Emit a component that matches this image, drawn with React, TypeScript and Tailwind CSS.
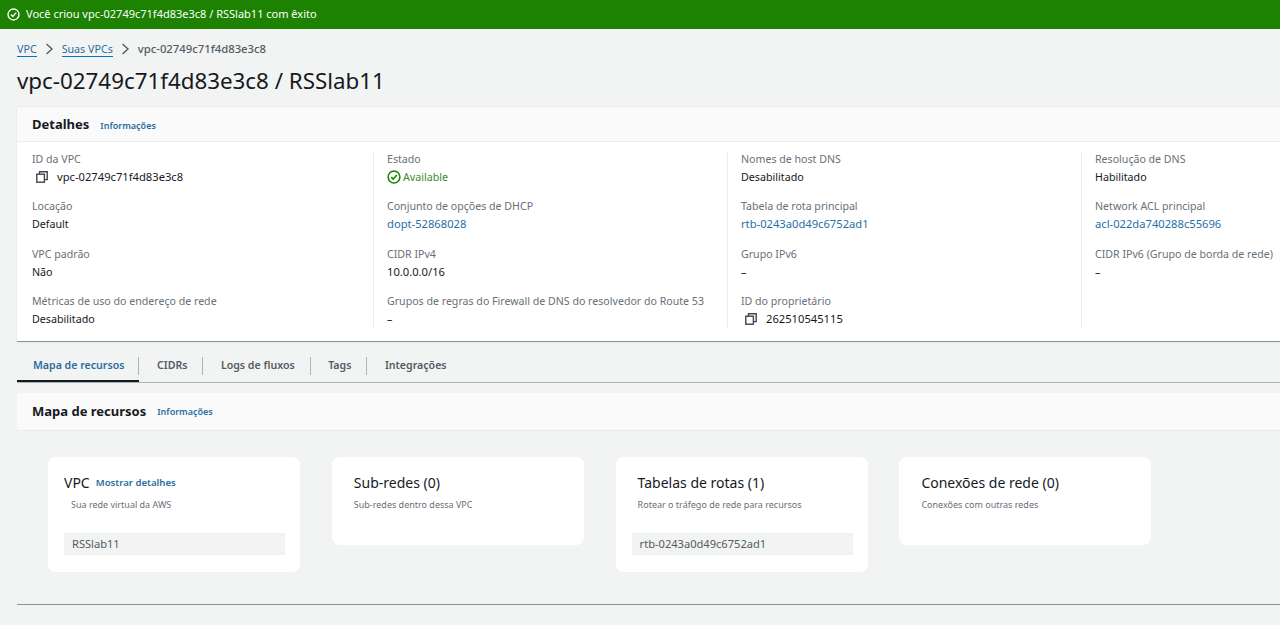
import React from "react";

const Copy = () => (
  <svg width="12" height="12" viewBox="0 0 12 12" fill="none" stroke="#414750" strokeWidth="1.4" className="shrink-0">
    <rect x="0.8" y="3.2" width="7.6" height="8" />
    <path d="M3.5 3V0.8H11.2V8.6H8.6" />
  </svg>
);

const Check = ({ color, size }: { color: string; size: number }) => (
  <svg width={size} height={size} viewBox="0 0 14 14" fill="none" stroke={color} strokeWidth="1.5" className="shrink-0">
    <circle cx="7" cy="7" r="5.9" />
    <path d="M4.2 7.1 6.2 9.1 9.9 5" />
  </svg>
);

const Chevron = () => (
  <svg width="9" height="12" viewBox="0 0 9 12" fill="none" stroke="#545b64" strokeWidth="1.4" className="shrink-0">
    <path d="M1.5 1 7 6 1.5 11" />
  </svg>
);

type Item = { l: string; v: string; kind?: "link" | "copy" | "ok" };

const columns: Item[][] = [
  [
    { l: "ID da VPC", v: "vpc-02749c71f4d83e3c8", kind: "copy" },
    { l: "Locação", v: "Default" },
    { l: "VPC padrão", v: "Não" },
    { l: "Métricas de uso do endereço de rede", v: "Desabilitado" },
  ],
  [
    { l: "Estado", v: "Available", kind: "ok" },
    { l: "Conjunto de opções de DHCP", v: "dopt-52868028", kind: "link" },
    { l: "CIDR IPv4", v: "10.0.0.0/16" },
    { l: "Grupos de regras do Firewall de DNS do resolvedor do Route 53", v: "–" },
  ],
  [
    { l: "Nomes de host DNS", v: "Desabilitado" },
    { l: "Tabela de rota principal", v: "rtb-0243a0d49c6752ad1", kind: "link" },
    { l: "Grupo IPv6", v: "–" },
    { l: "ID do proprietário", v: "262510545115", kind: "copy" },
  ],
  [
    { l: "Resolução de DNS", v: "Habilitado" },
    { l: "Network ACL principal", v: "acl-022da740288c55696", kind: "link" },
    { l: "CIDR IPv6 (Grupo de borda de rede)", v: "–" },
  ],
];

const Field = ({ item }: { item: Item }) => {
  const size = /\d/.test(item.v) ? "text-[11.2px]" : "text-[10.7px]";
  return (
    <div className="h-[47.33px]">
      <div className="h-[16px] text-[10.62px] leading-[14px] whitespace-nowrap text-[#687078]">{item.l}</div>
      <div className={size + " leading-[18px]"}>
        {item.kind === "copy" && (
          <div className="flex items-center gap-[9px] pl-1 text-[#16191f]">
            <Copy />
            <span>{item.v}</span>
          </div>
        )}
        {item.kind === "ok" && (
          <div className="flex items-center gap-[2px] text-[#3b8a2a]">
            <Check color="#1d8102" size={14} />
            <span>{item.v}</span>
          </div>
        )}
        {item.kind === "link" && <div className="text-[#1f6fa8]">{item.v}</div>}
        {!item.kind && <div className="text-[#16191f]">{item.v}</div>}
      </div>
    </div>
  );
};

const tabs = ["Mapa de recursos", "CIDRs", "Logs de fluxos", "Tags", "Integrações"];

const resources = [
  { t: "VPC", link: "Mostrar detalhes", d: "Sua rede virtual da AWS", v: "RSSlab11", first: true },
  { t: "Sub-redes (0)", d: "Sub-redes dentro dessa VPC" },
  { t: "Tabelas de rotas (1)", d: "Rotear o tráfego de rede para recursos", v: "rtb-0243a0d49c6752ad1" },
  { t: "Conexões de rede (0)", d: "Conexões com outras redes" },
];

export default function App() {
  return (
    <div
      className="h-[625px] w-[1280px] overflow-hidden bg-[#f2f3f3] text-[#16191f]"
      style={{ fontFamily: '"Noto Sans", "Open Sans", sans-serif' }}
    >
      <div className="flex h-[29px] items-center gap-[6px] bg-[#1d8102] pl-[7px] text-[11px] text-white">
        <Check color="#ffffff" size={13} />
        <span>Você criou vpc-02749c71f4d83e3c8 / RSSlab11 com êxito</span>
      </div>

      <div className="pl-[17px]">
        <div className="flex h-[40px] items-center text-[10.7px]">
          <span className="border-b border-[#0073bb] leading-[14px] text-[#2a6e9e]">VPC</span>
          <span className="mx-[8px]"><Chevron /></span>
          <span className="border-b border-[#0073bb] leading-[14px] text-[#2a6e9e]">Suas VPCs</span>
          <span className="mr-[8px] ml-[8px]"><Chevron /></span>
          <span className="text-[11.3px] font-medium text-[#545b64]">vpc-02749c71f4d83e3c8</span>
        </div>
        <h1 className="h-[38px] text-[22.35px] leading-[24px] font-normal whitespace-nowrap">vpc-02749c71f4d83e3c8 / RSSlab11</h1>

        <section className="w-[1420px] border-b border-[#8d9499] bg-white shadow-[0_0_1px_rgba(0,0,0,0.2)]">
          <div className="flex h-[35px] items-center gap-[11px] border-b border-[#eaeded] bg-[#fafafa] pt-[1px] pl-[15px]">
            <span className="text-[13px] font-bold">Detalhes</span>
            <span className="pt-[2px] text-[9px] font-semibold text-[#2a6e9e]">Informações</span>
          </div>
          <div className="flex pt-[10px] pb-[13px]">
            {columns.map((col, i) => (
              <div
                key={i}
                className={
                  i === 0
                    ? "ml-[15px] h-[176px] w-[341px]"
                    : "h-[176px] w-[354px] border-l border-[#eaeded] pl-[13px]"
                }
              >
                {col.map((item) => (
                  <Field key={item.l} item={item} />
                ))}
              </div>
            ))}
          </div>
        </section>

        <div className="mt-[10px] flex h-[31px] w-[1420px] items-start border-b border-[#aab7b8]">
          {tabs.map((t, i) => (
            <div
              key={t}
              className={
                "relative flex h-[30px] items-start pt-[5px] text-[10.6px] leading-[16px] font-semibold " +
                (i === 0
                  ? "border-b-2 border-[#16191f] pr-[15px] pl-[16px] text-[#2a6e9e]"
                  : "pr-[16px] pl-[17.5px] text-[#545b64]")
              }
            >
              {i < tabs.length - 1 && (
                <span className="absolute top-[5px] right-0 h-[18px] w-px bg-[#aab7b8]" />
              )}
              <span className="whitespace-nowrap">{t}</span>
            </div>
          ))}
        </div>

        <section className="mt-[10px] w-[1420px] border-b border-[#8d9499] bg-[#f2f3f3]">
          <div className="flex h-[38px] items-center gap-[11px] border-b border-[#eaeded] bg-[#fafafa] pl-[15px]">
            <span className="text-[13px] font-bold">Mapa de recursos</span>
            <span className="text-[9px] font-semibold text-[#2a6e9e]">Informações</span>
          </div>
          <div className="flex h-[173px] items-start gap-[31.8px] pt-[26px] pl-[31px]">
            {resources.map((r) => (
              <div
                key={r.t}
                className={"w-[252px] rounded-lg bg-white pt-[16px] pr-[15px] pl-[16px] " + (r.v ? "pb-[17px]" : "pb-[33px]")}
              >
                <div className={"flex h-[20px] items-center gap-[6px] whitespace-nowrap " + (r.first ? "" : "pl-[6px]")}>
                  <span className="text-[14px] leading-[20px]">{r.t}</span>
                  {r.link && <span className="text-[9.6px] font-semibold text-[#2a6e9e]">{r.link}</span>}
                </div>
                <div className={"mt-[5px] h-[14px] text-[9px] leading-[14px] whitespace-nowrap text-[#687078] " + (r.first ? "pl-[7px]" : "pl-[6px]")}>
                  {r.d}
                </div>
                {r.v && (
                  <div className="mt-[21px] flex h-[22px] items-center bg-[#f2f3f3] pl-2 text-[11.1px] text-[#545b64]">
                    {r.v}
                  </div>
                )}
              </div>
            ))}
          </div>
        </section>
      </div>
    </div>
  );
}
